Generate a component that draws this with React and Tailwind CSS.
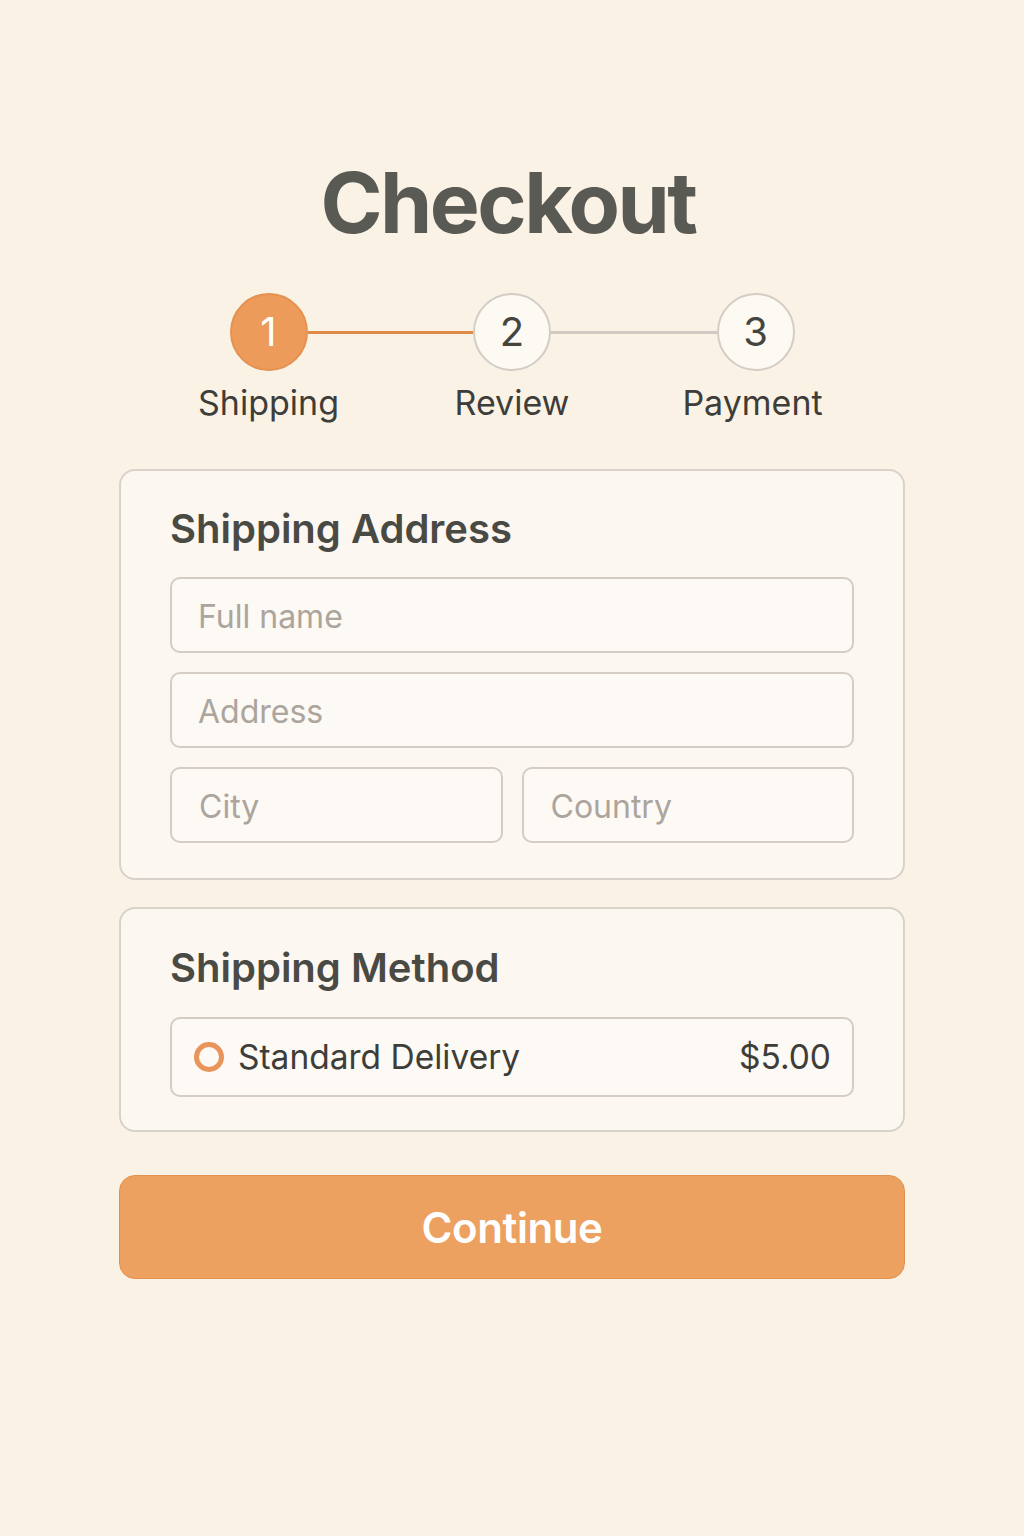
export default function App() {
  const font = { fontFamily: "Inter, 'Noto Sans', sans-serif" };
  return (
    <div className="w-[1024px] h-[1536px] bg-[#fbf2e6] flex flex-col items-center" style={font}>
      <h1 className="mt-[158px] pr-[8px] text-[84px] leading-[90px] font-bold tracking-[-0.03em] text-[#5a5a55]">Checkout</h1>

      <div className="mt-[45px] w-[565px] flex flex-col">
        <div className="flex items-center">
          <div className="w-[78px] h-[78px] rounded-full bg-[#ec9b5b] border-2 border-[#e59150] flex items-center justify-center text-white text-[40px]">1</div>
          <div className="flex-1 h-[3px] bg-[#e08a48]"></div>
          <div className="w-[78px] h-[78px] rounded-full bg-[#fdf9f3] border-2 border-[#d3cdc5] flex items-center justify-center text-[#45453f] text-[40px]">2</div>
          <div className="flex-1 h-[3px] bg-[#d0cac2]"></div>
          <div className="w-[78px] h-[78px] rounded-full bg-[#fdf9f3] border-2 border-[#d3cdc5] flex items-center justify-center text-[#45453f] text-[40px]">3</div>
        </div>
        <div className="flex justify-between mt-[10px] text-[34px] leading-[44px] text-[#3d3d39]">
          <span className="w-[180px] -ml-[51px] text-center">Shipping</span>
          <span className="w-[180px] text-center">Review</span>
          <span className="w-[180px] -mr-[51px] text-center pr-[6px]">Payment</span>
        </div>
      </div>

      <div className="mt-[44px] w-[786px] rounded-[16px] border-2 border-[#d8d2ca] bg-[#fcf7f0] px-[49px] pt-[32px] pb-[35px]">
        <h2 className="text-[40px] leading-[52px] font-semibold text-[#4a4a45]">Shipping Address</h2>
        <div className="mt-[22px] flex flex-col gap-[19px]">
          <div className="h-[76px] rounded-[10px] border-2 border-[#d3cdc5] bg-[#fdf9f4] flex items-center pt-[4px] px-[26px] text-[32px] text-[#aba59d]">Full name</div>
          <div className="h-[76px] rounded-[10px] border-2 border-[#d3cdc5] bg-[#fdf9f4] flex items-center pt-[4px] px-[26px] text-[32px] text-[#aba59d]">Address</div>
          <div className="grid grid-cols-2 gap-[19px]">
            <div className="h-[76px] rounded-[10px] border-2 border-[#d3cdc5] bg-[#fdf9f4] flex items-center pt-[4px] px-[27px] text-[32px] text-[#aba59d]">City</div>
            <div className="h-[76px] rounded-[10px] border-2 border-[#d3cdc5] bg-[#fdf9f4] flex items-center pt-[4px] px-[27px] text-[32px] text-[#aba59d]">Country</div>
          </div>
        </div>
      </div>

      <div className="mt-[27px] w-[786px] rounded-[16px] border-2 border-[#d8d2ca] bg-[#fcf7f0] px-[49px] pt-[33px] pb-[33px]">
        <h2 className="text-[40px] leading-[52px] font-semibold text-[#4a4a45]">Shipping Method</h2>
        <div className="mt-[23px] h-[80px] rounded-[10px] border-2 border-[#d3cdc5] bg-[#fdf9f4] flex items-center pl-[22px] pr-[21px]">
          <div className="w-[30px] h-[30px] rounded-full border-[5px] border-[#e8945a] bg-[#fdf9f4]"></div>
          <span className="ml-[14px] text-[33.5px] text-[#3d3d39]">Standard Delivery</span>
          <span className="ml-auto text-[33.5px] text-[#3d3d39]">$5.00</span>
        </div>
      </div>

      <button className="mt-[43px] w-[786px] h-[104px] rounded-[16px] bg-[#eda160] border border-[#e3914f] text-white text-[42px] font-semibold tracking-[-0.01em]">Continue</button>
    </div>
  );
}
